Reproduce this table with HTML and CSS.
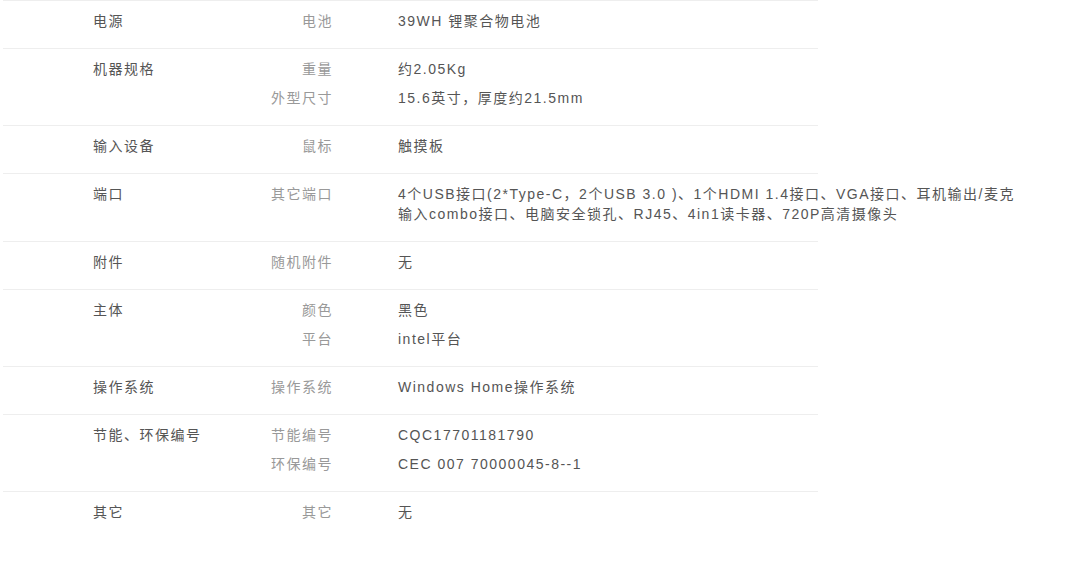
FILE: index.html
```html
<!DOCTYPE html>
<html lang="zh-CN">
<head>
  <meta charset="UTF-8">
  <title>规格参数</title>
  <link rel="stylesheet" href="styles.css">
</head>
<body>
  <div class="spec-list">
    <div class="spec-group">
      <div class="group-name">电源</div>
      <div class="items">
        <div class="item"><span class="item-key">电池</span><span class="item-val">39WH 锂聚合物电池</span></div>
      </div>
    </div>
    <div class="spec-group">
      <div class="group-name">机器规格</div>
      <div class="items">
        <div class="item"><span class="item-key">重量</span><span class="item-val">约2.05Kg</span></div>
        <div class="item"><span class="item-key">外型尺寸</span><span class="item-val">15.6英寸，厚度约21.5mm</span></div>
      </div>
    </div>
    <div class="spec-group">
      <div class="group-name">输入设备</div>
      <div class="items">
        <div class="item"><span class="item-key">鼠标</span><span class="item-val">触摸板</span></div>
      </div>
    </div>
    <div class="spec-group">
      <div class="group-name">端口</div>
      <div class="items">
        <div class="item"><span class="item-key">其它端口</span><span class="item-val">4个USB接口(2*Type-C，2个USB 3.0 )、1个HDMI 1.4接口、VGA接口、耳机输出/麦克输入combo接口、电脑安全锁孔、RJ45、4in1读卡器、720P高清摄像头</span></div>
      </div>
    </div>
    <div class="spec-group">
      <div class="group-name">附件</div>
      <div class="items">
        <div class="item"><span class="item-key">随机附件</span><span class="item-val">无</span></div>
      </div>
    </div>
    <div class="spec-group">
      <div class="group-name">主体</div>
      <div class="items">
        <div class="item"><span class="item-key">颜色</span><span class="item-val">黑色</span></div>
        <div class="item"><span class="item-key">平台</span><span class="item-val">intel平台</span></div>
      </div>
    </div>
    <div class="spec-group">
      <div class="group-name">操作系统</div>
      <div class="items">
        <div class="item"><span class="item-key">操作系统</span><span class="item-val">Windows Home操作系统</span></div>
      </div>
    </div>
    <div class="spec-group">
      <div class="group-name">节能、环保编号</div>
      <div class="items">
        <div class="item"><span class="item-key">节能编号</span><span class="item-val">CQC17701181790</span></div>
        <div class="item"><span class="item-key">环保编号</span><span class="item-val">CEC 007 70000045-8--1</span></div>
      </div>
    </div>
    <div class="spec-group">
      <div class="group-name">其它</div>
      <div class="items">
        <div class="item"><span class="item-key">其它</span><span class="item-val">无</span></div>
      </div>
    </div>
  </div>
</body>
</html>
```

FILE: styles.css
```css
body {
  margin: 0;
  background-color: #fff;
  font-family: "Liberation Sans", "Noto Sans CJK SC", sans-serif;
  font-size: 14px;
  letter-spacing: 1.5px;
  color: #555;
}
.spec-list {
  margin-left: 3px;
  width: 815px;
}
.spec-group {
  display: flex;
  padding: 10px 0 8px 90px;
  border-top: 1px solid #eee;
  line-height: 20px;
}
.group-name {
  width: 150px;
  flex-shrink: 0;
  color: #555;
}
.items {
  display: flex;
  flex-direction: column;
}
.item {
  display: flex;
  margin-bottom: 9px;
}
.item-key {
  width: 90px;
  flex-shrink: 0;
  text-align: right;
  color: #999;
}
.item-val {
  width: 632px;
  flex-shrink: 0;
  margin-left: 65px;
  color: #555;
}
```
